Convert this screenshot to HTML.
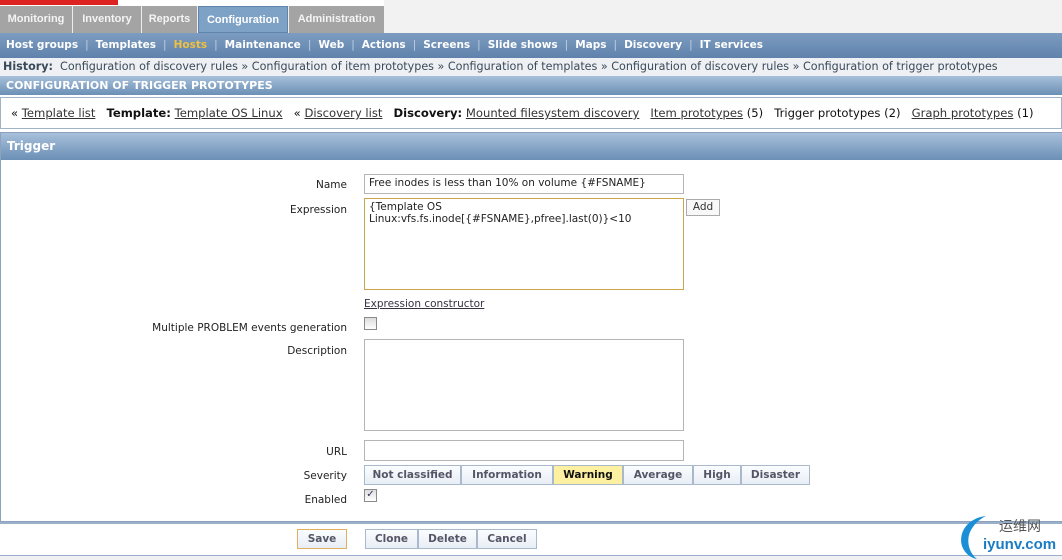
<!DOCTYPE html>
<html><head><style>
*{margin:0;padding:0;box-sizing:border-box}
body{width:1062px;height:560px;overflow:hidden;background:#fff;font-family:"DejaVu Sans",sans-serif;font-size:11px;color:#222;position:relative}
.a{position:absolute}
.tab{position:absolute;top:6px;height:27px;line-height:27px;background:#a4a4a4;color:#f4f4f4;font-weight:bold;text-align:center;font-size:11px;font-family:"Liberation Sans",sans-serif}
.sub{position:absolute;top:33px;height:25px;left:0;width:1062px;background:linear-gradient(#7d9cc0,#5f82ac);color:#fff;font-weight:bold;line-height:25px;padding-left:6px;white-space:nowrap;font-size:10.5px}
.sub span.s{color:#c0d0e4;padding:0 7px;font-weight:normal}
.hdr{background:linear-gradient(#a7c0da,#6b8fb6);color:#fff;font-weight:bold;font-size:11px}
a{color:#333;text-decoration:underline}
.lbl{position:absolute;right:715px;text-align:right;color:#222;font-size:10.5px}
.inp{position:absolute;border:1px solid #b5b5b5;background:#fff;font-size:10.5px;padding:2px 4px}
.btn{position:absolute;border:1px solid #a9b9cb;background:linear-gradient(#fbfdff,#e8eef5);color:#556;font-weight:bold;text-align:center;line-height:18px;font-size:10.5px}
.cb{position:absolute;width:13px;height:13px;border:1px solid #8a8a8a;background:linear-gradient(#ddd,#fff)}
</style></head><body>
<div class="a" style="left:0;top:0;width:118px;height:5px;background:#d22"></div>
<div class="a" style="left:0;top:6px;width:384px;height:27px;background:#eee"></div>
<div class="a" style="left:384px;top:0;width:678px;height:33px;background:#f2f2f2"></div>
<div class="tab" style="left:0;width:72px">Monitoring</div>
<div class="tab" style="left:73px;width:68px">Inventory</div>
<div class="tab" style="left:142px;width:55px">Reports</div>
<div class="tab" style="left:198px;width:90px;background:#7ea1c6;border:1px solid #5f84ad;color:#fff">Configuration</div>
<div class="tab" style="left:289px;width:95px">Administration</div>
<div class="sub">Host groups<span class="s">|</span>Templates<span class="s">|</span><span style="color:#f0c040">Hosts</span><span class="s">|</span>Maintenance<span class="s">|</span>Web<span class="s">|</span>Actions<span class="s">|</span>Screens<span class="s">|</span>Slide shows<span class="s">|</span>Maps<span class="s">|</span>Discovery<span class="s">|</span>IT services</div>
<div class="a" style="left:0;top:58px;width:1062px;height:18px;background:#eef0f3;line-height:17px;padding-left:3px;color:#3a4a5a;white-space:nowrap;font-size:11.15px"><b>History:</b>&nbsp; Configuration of discovery rules » Configuration of item prototypes » Configuration of templates » Configuration of discovery rules » Configuration of trigger prototypes</div>
<div class="a hdr" style="left:0;top:76px;width:1062px;height:19px;line-height:19px;padding-left:6px">CONFIGURATION OF TRIGGER PROTOTYPES</div>
<div class="a" style="left:0;top:97px;width:1062px;height:32px;border:1px solid #a0b4c8;line-height:30px;padding-left:10px;font-size:11.6px;white-space:nowrap;color:#111">« <a>Template list</a> &nbsp; <b>Template:</b> <a>Template OS Linux</a> &nbsp; « <a>Discovery list</a> &nbsp; <b>Discovery:</b> <a>Mounted filesystem discovery</a> &nbsp; <a>Item prototypes</a> (5) &nbsp; Trigger prototypes (2) &nbsp; <a>Graph prototypes</a> (1)</div>
<div class="a" style="left:0;top:132px;width:1062px;height:390px;border:1px solid #8aa3bf;border-right:none"></div>
<div class="a hdr" style="left:1px;top:133px;width:1061px;height:27px;line-height:27px;padding-left:6px;font-size:12px">Trigger</div>
<div class="lbl" style="top:179px">Name</div>
<div class="inp" style="left:364px;top:174px;width:320px;height:20px">Free inodes is less than 10% on volume {#FSNAME}</div>
<div class="lbl" style="top:204px">Expression</div>
<div class="inp" style="left:364px;top:198px;width:320px;height:92px;border-color:#c9a64a;line-height:12px">{Template OS<br>Linux:vfs.fs.inode[{#FSNAME},pfree].last(0)}&lt;10</div>
<div class="btn" style="left:686px;top:199px;width:34px;height:17px;color:#333;font-weight:normal;line-height:15px;border-color:#aaa;background:#f8f8f8">Add</div>
<div class="a" style="left:364px;top:298px;font-size:10.5px"><a style="color:#334">Expression constructor</a></div>
<div class="lbl" style="top:322px">Multiple PROBLEM events generation</div>
<div class="cb" style="left:364px;top:317px"></div>
<div class="lbl" style="top:345px">Description</div>
<div class="inp" style="left:364px;top:339px;width:320px;height:92px"></div>
<div class="lbl" style="top:446px">URL</div>
<div class="inp" style="left:364px;top:440px;width:320px;height:21px"></div>
<div class="lbl" style="top:470px">Severity</div>
<div class="btn" style="left:364px;top:465px;width:97px;height:20px">Not classified</div>
<div class="btn" style="left:461px;top:465px;width:92px;height:20px">Information</div>
<div class="btn" style="left:553px;top:465px;width:70px;height:20px;background:#fdf0a0;color:#111">Warning</div>
<div class="btn" style="left:623px;top:465px;width:70px;height:20px">Average</div>
<div class="btn" style="left:693px;top:465px;width:48px;height:20px">High</div>
<div class="btn" style="left:741px;top:465px;width:69px;height:20px">Disaster</div>
<div class="lbl" style="top:494px">Enabled</div>
<div class="cb" style="left:364px;top:489px;text-align:center;line-height:10px;font-size:10px;color:#336">✓</div>
<div class="a" style="left:0;top:522px;width:1062px;height:34px;border-top:2px solid #9bb0c8;border-bottom:1px solid #9bb0c8;background:#fff"></div>
<div class="a" style="left:0;top:556px;width:1062px;height:4px;background:#eef0f3"></div>
<div class="btn" style="left:297px;top:529px;width:50px;height:20px;border-color:#e0b060">Save</div>
<div class="btn" style="left:365px;top:529px;width:53px;height:20px">Clone</div>
<div class="btn" style="left:418px;top:529px;width:59px;height:20px">Delete</div>
<div class="btn" style="left:477px;top:529px;width:60px;height:20px">Cancel</div>
<svg class="a" style="left:958px;top:514px" width="34" height="46"><path d="M28 2 C10 4 0 18 4 32 C7 40 13 44 19 45 C10 38 8 25 13 16 C17 9 22 5 28 2Z" fill="#1a8fd6"/></svg>
<div class="a" style="left:999px;top:516px;font-family:'Noto Sans CJK SC',sans-serif;font-size:14px;color:#555">运维网</div>
<div class="a" style="left:983px;top:536px;font-family:'Liberation Sans',sans-serif;font-size:15px;font-weight:bold;color:#1a7cc4">iyunv.com</div>
</body></html>
